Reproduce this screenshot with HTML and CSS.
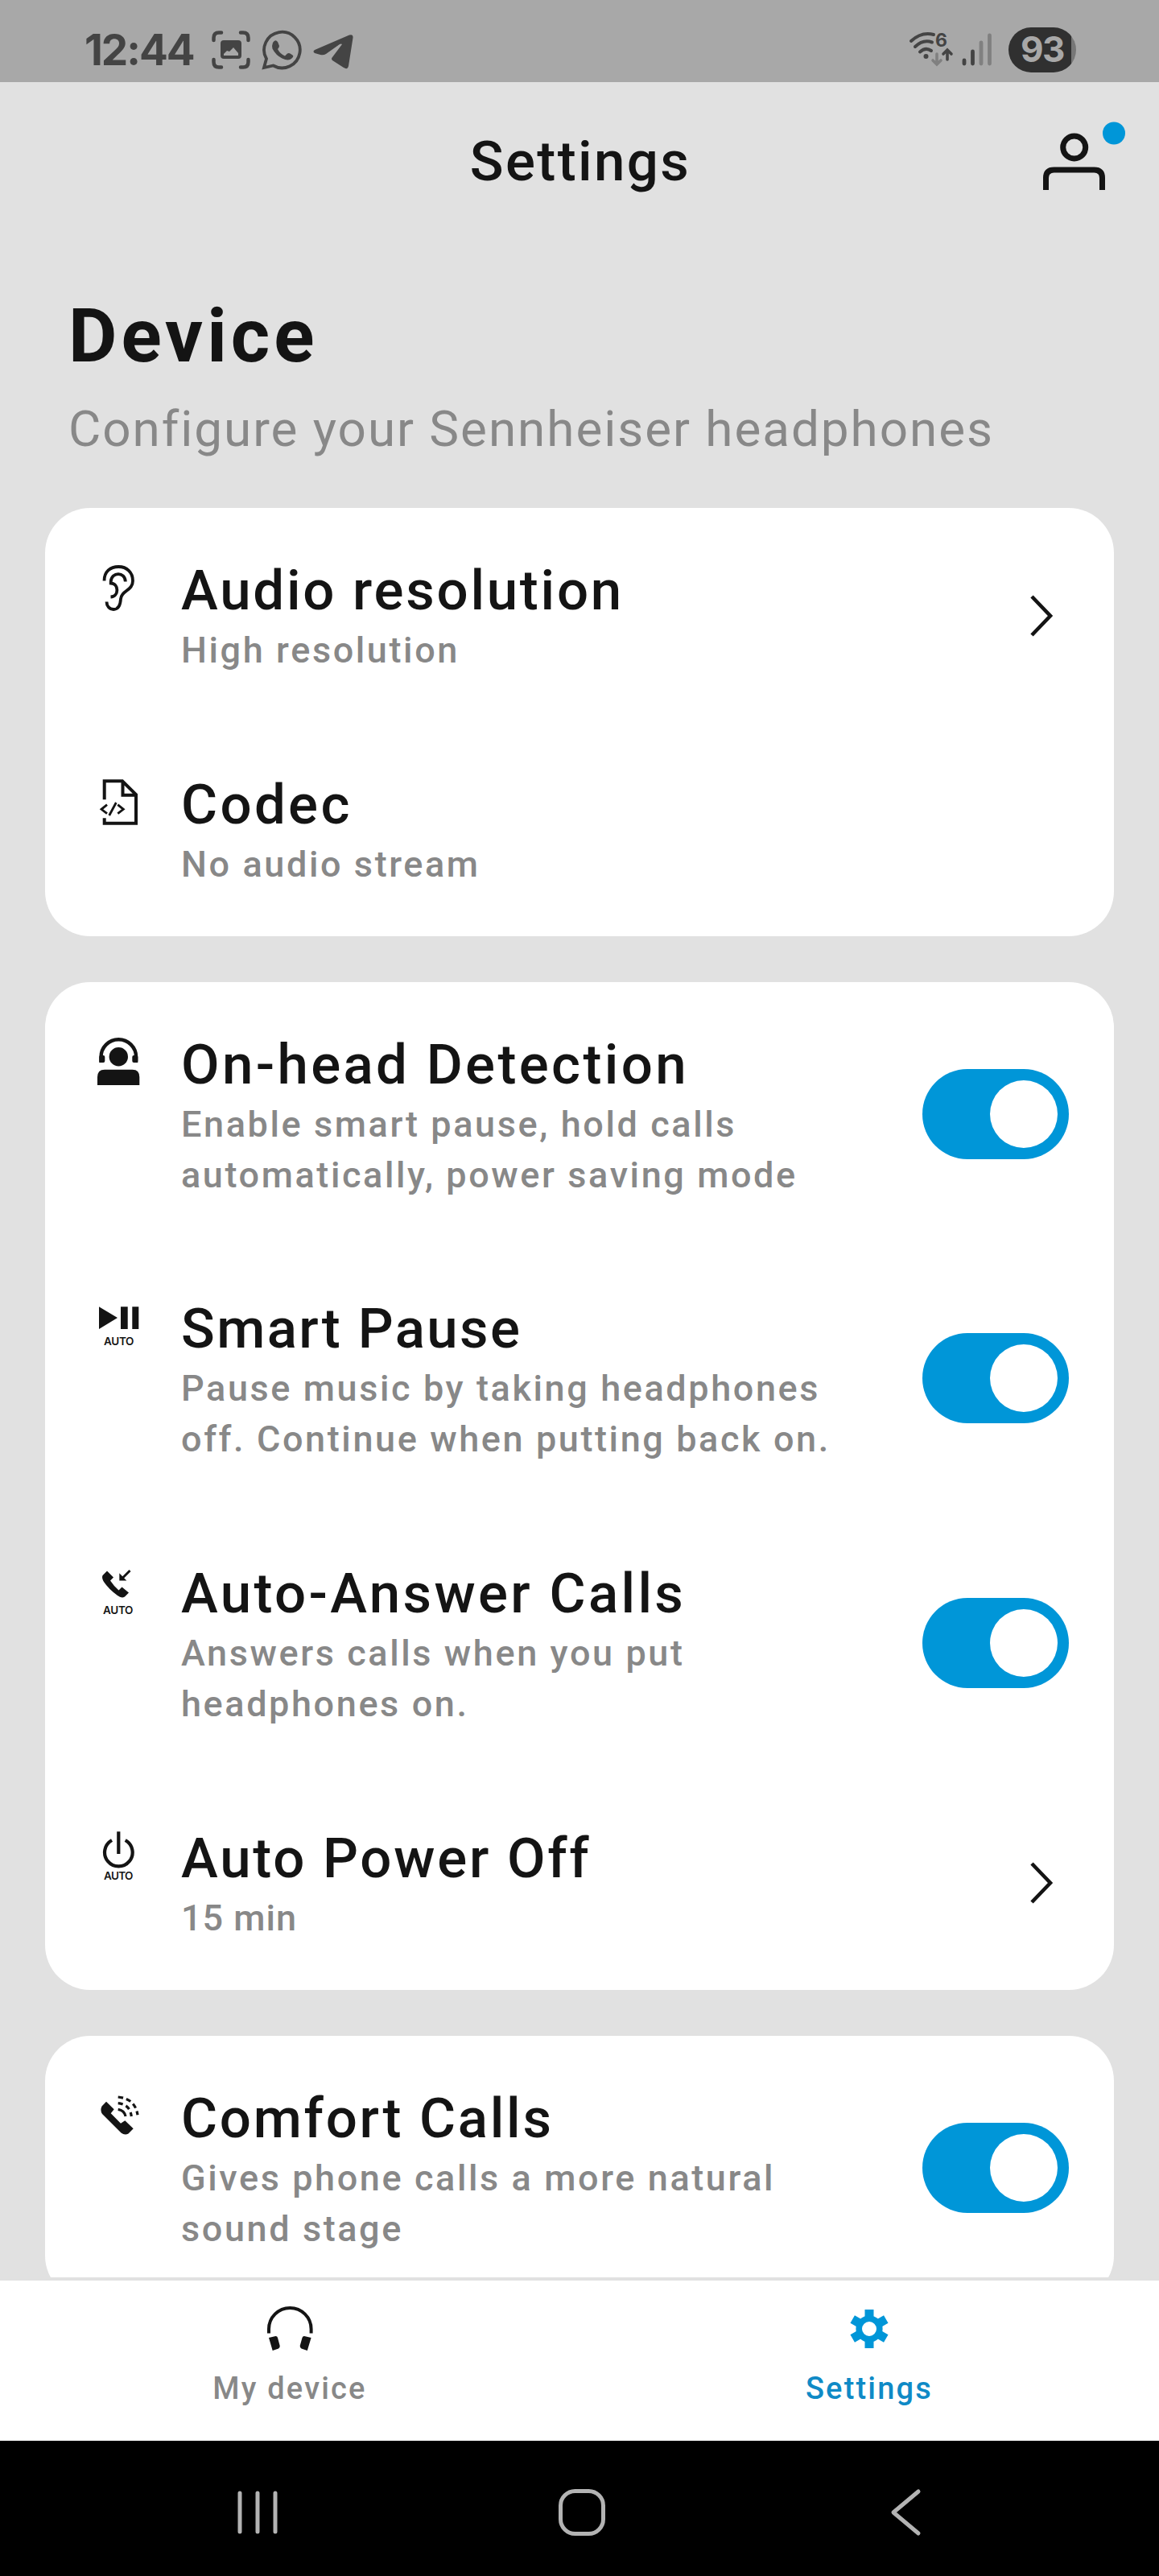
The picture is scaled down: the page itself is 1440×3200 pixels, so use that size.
FILE: index.html
```html
<!DOCTYPE html>
<html lang="en">
<head>
    <meta charset="UTF-8">
    <title>Settings</title>
    <link rel="stylesheet" href="styles.css">
</head>
<body>
<div class="status">
    <span class="time">12:44</span>
    <svg class="capture" width="48" height="48" viewBox="0 0 48 48">
        <path d="M2.500 12V9Q2.500 2.500 9 2.500H12M36 2.500h3Q45.500 2.500 45.500 9v3M45.500 36v3Q45.500 45.500 39 45.500h-3M12 45.500H9Q2.500 45.500 2.500 39v-3" fill="none" stroke="#444" stroke-width="4.500" stroke-linecap="round"/>
        <path fill="#444" fill-rule="evenodd" d="M15 12h18q4 0 4 4v15q0 4-4 4H15q-4 0-4-4V16q0-4 4-4zM15 31h18v-3l-6-7-5 5-3-1-4 4z"/>
    </svg>
    <svg class="whatsapp" width="50" height="50" viewBox="0 0 50 50">
        <path d="M3 47L6 36A22.300 22.300 0 1 1 14.500 44.500Z" fill="none" stroke="#444" stroke-width="3.800"/>
        <path fill="#444" d="M14 16q3-5 6-1l2 5q0 2-2 4 3 6 9 8.500l3-3q2-1 3.500 0l3 2q2 1.500-1 4-4 4-12 0-8-4-12-12-1-4 .5-7.500z"/>
    </svg>
    <svg class="telegram" width="50" height="44" viewBox="0 0 50 44">
        <path fill="#444" d="M2 20L45 1.500Q50 0 49.500 5L44 40Q43 45 38 42L24 33Q22 31 24 29L36 13Q35 12 33 13L16 25Q13 27 9 26L2 24Q-1 22 2 20Z"/>
    </svg>
    <svg class="wifi" width="56" height="60" viewBox="0 -7 56 60">
        <g fill="none" stroke="#444" stroke-width="4" stroke-linecap="round">
            <path d="M3 12Q16 0 31 4M8 19Q18 9.500 29 13.500M14 25.500Q21 19 28 24"/>
            <path d="M48 35V24M43 28L48 23L53 28" stroke-width="3.600"/>
            <path d="M35 28v12M30 36l5 5 5-5" stroke="#808080" stroke-width="3.600"/>
        </g>
        <circle cx="21.500" cy="31" r="3" fill="#444"/>
        <text class="wifi-num" x="33" y="19">6</text>
    </svg>
    <svg class="signal" width="38" height="42" viewBox="0 0 38 42">
        <g stroke-width="4.800" stroke-linecap="round">
            <path d="M3 34v4M13.500 23v15" stroke="#444"/>
            <path d="M24 12v26M34.500 3v35" stroke="#808080"/>
        </g>
    </svg>
    <div class="battery"><span>93</span></div>
</div>

<div class="content">
    <div class="header">
        <h1>Settings</h1>
        <svg class="profile" width="102" height="86" viewBox="0 0 102 86">
            <g fill="none" stroke="#141414" stroke-width="7">
                <circle cx="38.700" cy="32" r="14"/>
                <path d="M3.500 85V70Q3.500 60 13.500 60H63.500Q73.500 60 73.500 70V85"/>
            </g>
            <circle cx="88" cy="14.500" r="14" fill="#0096d8"/>
        </svg>
    </div>
    <div class="intro">
        <h2>Device</h2>
        <p>Configure your Sennheiser headphones</p>
    </div>

    <div class="card">
        <div class="row">
            <svg class="icon" viewBox="0 0 64 64">
                <g fill="none" stroke="#141414" stroke-width="3.800">
                    <path d="M14.500 23.500C14.500 12 22 6 32.300 6S50 13 50 23.500C50 36 36 35 35 46C34.500 55 31 59 26 59S17.500 55 17.500 49.500"/>
                    <path d="M40.800 24.500C40.500 12 23.500 12 22.700 24.500V26.500C33 27 33 43 22.500 43.500"/>
                </g>
            </svg>
            <div class="text"><h3>Audio resolution</h3><p>High resolution</p></div>
            <svg class="chevron" viewBox="0 0 30 54"><path d="M3 3L26 27L3 51"/></svg>
        </div>
        <div class="row">
            <svg class="icon" viewBox="0 0 64 64">
                <g fill="none" stroke="#141414" stroke-width="4">
                    <path d="M14.700 29.300V6.300H37L54 23V58.700H14.700V52.300M37.500 6.300V23.700H54"/>
                    <path stroke-width="2.800" d="M18 35.700L11 41.300L18 46.700M29.300 33L20.700 49M31.300 35.700L38.300 41.300L31.300 46.700"/>
                </g>
            </svg>
            <div class="text"><h3 class="wide">Codec</h3><p>No audio stream</p></div>
        </div>
    </div>

    <div class="card">
        <div class="row">
            <svg class="icon" viewBox="0 0 64 64">
                <path d="M10.500 33V26A21.800 21.800 0 0 1 54.100 26V33" fill="none" stroke="#141414" stroke-width="4.400"/>
                <g fill="#141414">
                    <rect x="8.300" y="24" width="7" height="9" rx="2"/>
                    <rect x="49.300" y="24" width="7" height="9" rx="2"/>
                    <circle cx="32.300" cy="25.700" r="11.700"/>
                    <path d="M6 61V51Q6 41.700 15 41.700H49.500Q58.300 41.700 58.300 51V61Z"/>
                </g>
            </svg>
            <div class="text"><h3 class="wide">On-head Detection</h3><p>Enable smart pause, hold calls<br>automatically, power saving mode</p></div>
            <div class="toggle"></div>
        </div>
        <div class="row">
            <svg class="icon" viewBox="0 0 64 64">
                <path fill="#141414" d="M8 8.300L31 22L8 36ZM35 8.300h8.700V36H35ZM49.300 8.300h8V36h-8Z"/>
                <text class="auto" x="14" y="56" textLength="37.500">AUTO</text>
            </svg>
            <div class="text"><h3 class="tight">Smart Pause</h3><p>Pause music by taking headphones<br>off. Continue when putting back on.</p></div>
            <div class="toggle"></div>
        </div>
        <div class="row">
            <svg class="icon" viewBox="0 0 64 64">
                <path fill="#141414" d="M12.500 13L18 7.500L26 15.500L22 19.500Q27 27 32.500 31.500L36.500 27.500L45 34.500L40 39.500Q36 42 31 38Q20 30 14 21Q11 16 12.500 13Z"/>
                <path fill="#141414" d="M33.300 10.300V19.500H42.300Z"/>
                <path d="M46.500 7L37 16.500" stroke="#141414" stroke-width="3"/>
                <text class="auto" x="13" y="60.500" textLength="37.500">AUTO</text>
            </svg>
            <div class="text"><h3 class="wide">Auto-Answer Calls</h3><p>Answers calls when you put<br>headphones on.</p></div>
            <div class="toggle"></div>
        </div>
        <div class="row">
            <svg class="icon" viewBox="0 0 64 64">
                <path d="M32.300 2.200V30M24 13A17.300 17.300 0 1 0 40.700 13" fill="none" stroke="#141414" stroke-width="4.200"/>
                <text class="auto" x="14" y="61.500" textLength="36.500">AUTO</text>
            </svg>
            <div class="text"><h3>Auto Power Off</h3><p class="tight">15 min</p></div>
            <svg class="chevron" viewBox="0 0 30 54"><path d="M3 3L26 27L3 51"/></svg>
        </div>
    </div>

    <div class="card">
        <div class="row">
            <svg class="icon" viewBox="0 0 64 64">
                <path fill="#141414" d="M17 14.700L26.700 24.300L22.700 29.300L35 41.700L40.300 38.300L50.700 48.300L44.500 54.500Q40 57 35.500 53.500L12 30Q9 25.500 11.500 20.500Z"/>
                <g fill="none" stroke="#141414" stroke-width="3.200">
                    <path d="M31.700 24.300Q39.500 25.500 41 33"/>
                    <path d="M31.700 16.700Q46.500 18 48.300 33" stroke-dasharray="6 4.200"/>
                    <path d="M31.700 9Q53 11 56 31.300" stroke-dasharray="6.200 4.200"/>
                </g>
            </svg>
            <div class="text"><h3>Comfort Calls</h3><p>Gives phone calls a more natural<br>sound stage</p></div>
            <div class="toggle"></div>
        </div>
    </div>
</div>

<div class="tabs">
    <div class="tab">
        <svg width="64" height="68" viewBox="0 0 64 68">
            <path d="M6 42.600V37.300A26.300 26.300 0 0 1 58.600 37.300V42.600" fill="none" stroke="#141414" stroke-width="4"/>
            <path fill="#141414" d="M6 48L14.500 46Q16.500 46 17 48L19.700 58Q20 60.500 18 61.500L10.700 64ZM58.600 48L50 46Q48 46 47.500 48L44.700 58Q44.500 60.500 46.500 61.500L53.800 64Z"/>
        </svg>
        <span>My device</span>
    </div>
    <div class="tab active">
        <svg width="64" height="68" viewBox="0 0 64 68">
            <circle cx="32" cy="37" r="12.800" fill="none" stroke="#0096d8" stroke-width="7.600"/>
            <g stroke="#0096d8" stroke-width="11">
                <path d="M32 13V26M32 48V61"/>
                <path d="M32 13V26M32 48V61" transform="rotate(60 32 37)"/>
                <path d="M32 13V26M32 48V61" transform="rotate(120 32 37)"/>
            </g>
        </svg>
        <span>Settings</span>
    </div>
</div>

<div class="navbar">
    <svg width="60" height="60" viewBox="0 0 60 60"><path d="M8 6V54M30 6V54M52 6V54"/></svg>
    <svg width="60" height="60" viewBox="0 0 60 60"><rect x="3.500" y="3.500" width="53" height="53" rx="18"/></svg>
    <svg width="60" height="60" viewBox="0 0 60 60"><path d="M46 4L15 30L46 56"/></svg>
</div>
</body>
</html>
```
FILE: styles.css
```css
*{
    padding: 0;
    margin: 0;
    box-sizing: border-box;
}
body{
    width: 1440px;
    height: 3200px;
    display: flex;
    flex-direction: column;
    overflow: hidden;
    background: #e1e1e1;
    color: #141414;
    font-family: Roboto, "Liberation Sans", sans-serif;
}
svg{
    display: block;
    flex: none;
}

/* status bar */
.status{
    height: 102px;
    flex: none;
    display: flex;
    align-items: center;
    padding: 22px 103px 0 105px;
    background: #a8a8a8;
}
.time{
    width: 158px;
    font: bold 53px/56px Inter, sans-serif;
    letter-spacing: -2px;
    color: #444;
    white-space: nowrap;
}
.whatsapp{
    margin-left: 14px;
}
.telegram{
    margin: 4px auto 0 14px;
}
.wifi-num{
    font: bold 23px Inter, sans-serif;
    fill: #444;
}
.signal{
    margin: 0 20px 0 10px;
}
.battery{
    width: 84px;
    height: 56px;
    border-radius: 28px;
    background: linear-gradient(90deg, #303030 78px, #777 78px);
    text-align: center;
}
.battery span{
    font: bold 44px/54px Inter, sans-serif;
    letter-spacing: -1.5px;
    color: #a8a8a8;
}

/* page */
.content{
    flex: 1;
    min-height: 0;
    overflow: hidden;
    padding: 0 56px;
}
.header{
    height: 198px;
    display: grid;
    grid-template-columns: 1fr auto 1fr;
    align-items: center;
    padding-bottom: 2px;
}
.header h1{
    grid-column: 2;
    font-size: 69px;
    font-weight: 500;
    letter-spacing: 2.4px;
    margin-right: -2px;
}
.profile{
    justify-self: end;
    margin-right: -14px;
    margin-top: -13px;
}
.intro{
    height: 331px;
    padding: 66px 30px 0 29px;
}
.intro h2{
    font-size: 93px;
    line-height: 104px;
    font-weight: bold;
    letter-spacing: 5px;
}
.intro p{
    font-size: 62px;
    line-height: 74px;
    margin-top: 26px;
    letter-spacing: 1.95px;
    color: #888;
    white-space: nowrap;
}
.card{
    background: #fff;
    border-radius: 56px;
    margin-bottom: 57px;
}
.row{
    display: flex;
    align-items: center;
    padding: 62px 56px 57.8px 59px;
}
.icon{
    width: 64px;
    height: 64px;
    align-self: flex-start;
    margin-top: 5px;
    margin-right: 46px;
}
.auto{
    font: 600 13.5px Inter, sans-serif;
    fill: #141414;
}
.text{
    flex: 1;
    white-space: nowrap;
}
.text h3{
    font-size: 69px;
    line-height: 81px;
    font-weight: 500;
    letter-spacing: 2.75px;
}
.text h3.wide{
    letter-spacing: 3.35px;
}
.text h3.tight{
    letter-spacing: 2.4px;
}
.text p{
    font-size: 45px;
    line-height: 63px;
    margin-top: 2px;
    font-weight: 500;
    letter-spacing: 2.6px;
    color: #888;
}
.text p.tight{
    letter-spacing: 1px;
}
.toggle{
    width: 182px;
    height: 112px;
    margin-bottom: 5px;
    padding: 14px;
    border-radius: 56px;
    background: #0096d8;
}
.toggle::after{
    content: "";
    display: block;
    width: 84px;
    height: 84px;
    margin-left: auto;
    border-radius: 50%;
    background: #fff;
}
.chevron{
    width: 30px;
    height: 54px;
    margin: 0 19px 3px 0;
}
.chevron path{
    fill: none;
    stroke: #141414;
    stroke-width: 4.6;
}

/* bottom tabs */
.tabs{
    height: 203px;
    flex: none;
    display: flex;
    border-top: 4px solid #e1e1e1;
    background: #fff;
}
.tab{
    flex: 1;
    display: flex;
    flex-direction: column;
    align-items: center;
    padding-top: 23px;
    font-size: 38px;
    line-height: 46px;
    font-weight: 500;
    letter-spacing: 2.2px;
    color: #888;
}
.tab span{
    margin-top: 20px;
}
.active{
    color: #0f8ac6;
}
.navbar{
    height: 168px;
    flex: none;
    display: flex;
    justify-content: space-between;
    align-items: center;
    padding: 10px 285px 0 290px;
    background: #000;
}
.navbar svg{
    fill: none;
    stroke: #b3b3b3;
    stroke-width: 5;
    stroke-linecap: round;
    stroke-linejoin: round;
}
```
